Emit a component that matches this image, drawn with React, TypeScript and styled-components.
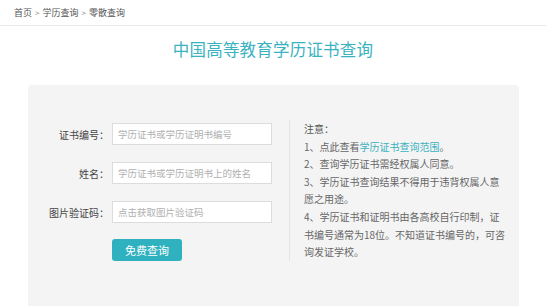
import React from 'react';
import styled, {createGlobalStyle} from 'styled-components';

const GlobalStyle = createGlobalStyle`
  html, body {
    margin: 0;
    padding: 0;
    background: #fff;
    font-family: "Noto Sans CJK SC", "Liberation Sans", sans-serif;
  }
  * {
    box-sizing: border-box;
  }
`

const Page = styled.div`
  width: 546px;
  height: 306px;
  overflow: hidden;
  display: flex;
  flex-direction: column;
`

const Crumbs = styled.nav`
  height: 26px;
  padding-left: 14px;
  display: flex;
  align-items: center;
  gap: 3px;
  font-size: 9px;
  color: #555;
  border-bottom: 1px solid #e8e8e8;
`

const CrumbSep = styled.span`
  color: #888;
  font-size: 8px;
`

const Title = styled.h1`
  margin: 0;
  height: 59px;
  display: flex;
  align-items: center;
  justify-content: center;
  padding-bottom: 14px;
  font-size: 16.5px;
  font-weight: 400;
  color: #3ab2c0;
  letter-spacing: 0.2px;
`

const Panel = styled.main`
  flex: 1;
  margin: 0 27px 0 28px;
  padding-top: 35px;
  background: #f4f4f4;
  border-radius: 4px 4px 0 0;
  display: flex;
  align-items: flex-start;
`

const Form = styled.form`
  width: 261px;
  display: flex;
  flex-direction: column;
  gap: 17px;
  padding-top: 3px;
`

const Row = styled.label`
  display: flex;
  align-items: center;
`

const Label = styled.span`
  width: 84px;
  padding-right: 3px;
  text-align: right;
  font-size: 10px;
  color: #444;
`

const Input = styled.input`
  width: 160px;
  height: 22px;
  padding: 0 5px;
  border: 1px solid #dcdcdc;
  background: #fff;
  font-family: inherit;
  font-size: 9.5px;
  color: #333;
  outline: none;

  &::placeholder {
    color: #b0b0b0;
  }
`

const Submit = styled.button`
  margin: -1px 0 0 84px;
  width: 70px;
  height: 22px;
  border: none;
  border-radius: 3px;
  background: #2fb1bf;
  color: #fff;
  font-family: inherit;
  font-size: 11px;
  cursor: pointer;
`

const Notes = styled.section`
  width: 219px;
  padding: 0 0 0 14px;
  border-left: 1px solid #e4e4e4;
  font-size: 10px;
  line-height: 17.6px;
  color: #666;
`

const NoteHead = styled.div`
  color: #555;
`

const Note = styled.p`
  margin: 0;
`

const Link = styled.a`
  color: #3ab2c0;
  text-decoration: none;
`

const fields = [
    {label: "证书编号：", placeholder: "学历证书或学历证明书编号"},
    {label: "姓名：", placeholder: "学历证书或学历证明书上的姓名"},
    {label: "图片验证码：", placeholder: "点击获取图片验证码"},
]

function App() {
    return (
        <Page>
            <GlobalStyle/>
            <Crumbs>
                <span>首页</span>
                <CrumbSep>&gt;</CrumbSep>
                <span>学历查询</span>
                <CrumbSep>&gt;</CrumbSep>
                <span>零散查询</span>
            </Crumbs>
            <Title>中国高等教育学历证书查询</Title>
            <Panel>
                <Form onSubmit={(e) => e.preventDefault()}>
                    {fields.map((f) => (
                        <Row key={f.label}>
                            <Label>{f.label}</Label>
                            <Input placeholder={f.placeholder}/>
                        </Row>
                    ))}
                    <Submit type="submit">免费查询</Submit>
                </Form>
                <Notes>
                    <NoteHead>注意：</NoteHead>
                    <Note>1、点此查看<Link href="#">学历证书查询范围</Link>。</Note>
                    <Note>2、查询学历证书需经权属人同意。</Note>
                    <Note>3、学历证书查询结果不得用于违背权属人意愿之用途。</Note>
                    <Note>4、学历证书和证明书由各高校自行印制，证书编号通常为18位。不知道证书编号的，可咨询发证学校。</Note>
                </Notes>
            </Panel>
        </Page>
    );
}

export default App;
